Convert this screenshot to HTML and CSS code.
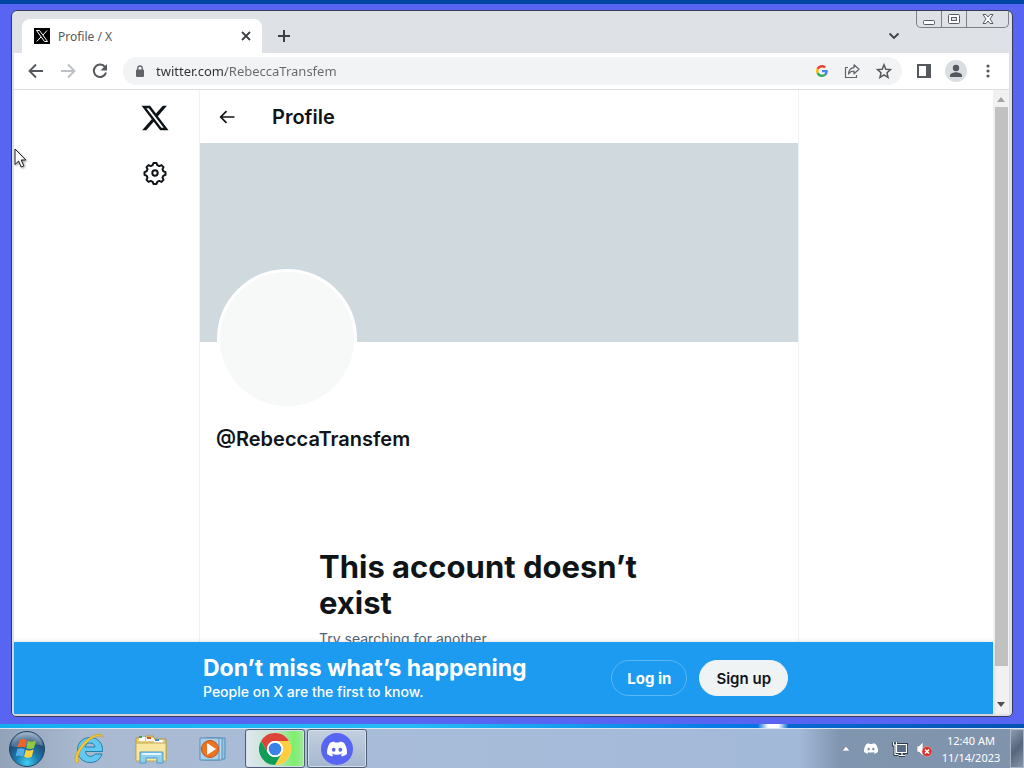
FILE: index.html
```html
<!DOCTYPE html>
<html lang="en">

<head>
    <meta charset="utf-8">
    <meta name="viewport" content="width=device-width, initial-scale=1.0">
    <title>Profile / X</title>
    <link rel="stylesheet" href="styles.css">
</head>

<body>
    <div class="desktop">
        <div class="window">
            <div class="tabstrip">
                <div class="tab">
                    <svg class="favicon" width="16" height="16" viewBox="0 0 16 16">
                        <rect width="16" height="16" fill="#000"/>
                        <path d="M2.5 2.5h3l8 11h-3zM13 2.5 9 7M7 9l-4.300 4.500" fill="none" stroke="#fff" stroke-width="1"/>
                    </svg>
                    <span class="tab-title">Profile / X</span>
                    <button class="icon-btn tab-close" aria-label="Close tab">
                        <svg width="10" height="10" viewBox="0 0 10 10"><path d="M1 1l8 8M9 1 1 9" stroke="#3c4043" stroke-width="1.800"/></svg>
                    </button>
                </div>
                <button class="icon-btn new-tab" aria-label="New tab">
                    <svg width="14" height="14" viewBox="0 0 14 14"><path d="M7 1v12M1 7h12" stroke="#3c4043" stroke-width="2"/></svg>
                </button>
                <button class="icon-btn tab-search" aria-label="Search tabs">
                    <svg width="12" height="8" viewBox="0 0 12 8"><path d="M1.500 1.500 6 6l4.500-4.500" fill="none" stroke="#3c4043" stroke-width="1.800"/></svg>
                </button>
                <div class="caption">
                    <button class="caption-btn" aria-label="Minimize">
                        <svg width="14" height="14" viewBox="0 0 14 14"><rect x="1.500" y="8.500" width="11" height="4" rx="1" fill="#fff" stroke="#5b5d66"/></svg>
                    </button>
                    <button class="caption-btn" aria-label="Maximize">
                        <svg width="14" height="14" viewBox="0 0 14 14"><rect x="1.500" y="2.500" width="11" height="9" rx="1" fill="#fff" stroke="#5b5d66"/><rect x="4.500" y="5.500" width="5" height="3" fill="#dee1e6" stroke="#5b5d66"/></svg>
                    </button>
                    <button class="caption-btn caption-close" aria-label="Close">
                        <svg width="14" height="14" viewBox="0 0 14 14"><path d="M2 2.500h3l2 2.500 2-2.500h3L9 7l3 4.500H9L7 9l-2 2.500H2L5 7z" fill="#fff" stroke="#5b5d66"/></svg>
                    </button>
                </div>
            </div>

            <div class="toolbar">
                <button class="icon-btn nav-btn" aria-label="Back">
                    <svg width="16" height="16" viewBox="0 0 16 16"><path d="M15 8H2M8 1.500 1.500 8 8 14.500" fill="none" stroke="#55585c" stroke-width="1.900"/></svg>
                </button>
                <button class="icon-btn nav-btn" aria-label="Forward">
                    <svg width="16" height="16" viewBox="0 0 16 16"><path d="M1 8h13M8 1.500 14.500 8 8 14.500" fill="none" stroke="#bdc0c4" stroke-width="1.900"/></svg>
                </button>
                <button class="icon-btn nav-btn" aria-label="Reload">
                    <svg width="16" height="16" viewBox="0 0 16 16"><path d="M13.300 4.500A6.200 6.200 0 1 0 14 9.500" fill="none" stroke="#55585c" stroke-width="2"/><path d="M15 1v6.500H8.500z" fill="#55585c"/></svg>
                </button>
                <div class="omnibox">
                    <svg class="lock" width="10" height="13" viewBox="0 0 10 13"><rect x="1" y="4.500" width="8" height="7.500" rx="1" fill="#5f6368"/><path d="M2.800 5V3a2.200 2 0 0 1 4.400 0v2" fill="none" stroke="#5f6368" stroke-width="1.300"/></svg>
                    <input class="url" type="text" aria-label="Address and search bar" value="twitter.com/RebeccaTransfem">
                    <svg width="12" height="12" viewBox="0 0 48 48">
                        <path fill="#ea4335" d="M24 9.500c3.540 0 6.710 1.220 9.210 3.600l6.850-6.850C35.900 2.380 30.470 0 24 0 14.620 0 6.510 5.380 2.560 13.220l7.980 6.190C12.430 13.720 17.740 9.500 24 9.500z"/>
                        <path fill="#4285f4" d="M46.980 24.550c0-1.570-.15-3.090-.38-4.550H24v9.020h12.940c-.58 2.960-2.260 5.480-4.780 7.180l7.730 6c4.510-4.180 7.090-10.360 7.090-17.650z"/>
                        <path fill="#fbbc05" d="M10.530 28.590A14.500 14.500 0 0 1 9.770 24c0-1.600.27-3.140.76-4.590l-7.980-6.190A23.900 23.900 0 0 0 0 24c0 3.880.92 7.540 2.560 10.780z"/>
                        <path fill="#34a853" d="M24 48c6.480 0 11.930-2.130 15.890-5.810l-7.730-6c-2.150 1.450-4.920 2.300-8.160 2.300-6.260 0-11.570-4.220-13.470-9.910l-7.980 6.190C6.510 42.620 14.620 48 24 48z"/>
                    </svg>
                    <svg width="16" height="16" viewBox="0 0 16 16"><path d="M4 4.500H1.500v10h11V12M4.500 11c.3-4 2-6 5.500-6.300V1.800L15 6.300l-5 4.500V8c-2.500 0-4 .8-5.500 3z" fill="none" stroke="#5f6368" stroke-width="1.200" stroke-linejoin="round"/></svg>
                    <svg width="16" height="16" viewBox="0 0 16 16"><path d="m8 1.800 1.800 4.400 4.700.4L11 9.700l1 4.600-4-2.500-4 2.500 1-4.600-3.500-3.100 4.700-.4z" fill="none" stroke="#55585c" stroke-width="1.500"/></svg>
                </div>
                <button class="icon-btn tool-btn" aria-label="Side panel">
                    <svg width="14" height="14" viewBox="0 0 14 14"><rect x="1" y="1" width="12" height="12" fill="#fff" stroke="#55585c" stroke-width="2"/><path d="M9 0h5v14H9z" fill="#55585c"/></svg>
                </button>
                <button class="icon-btn tool-btn account" aria-label="You">
                    <svg width="14" height="14" viewBox="0 0 14 14"><circle cx="7" cy="4" r="3.200" fill="#55585c"/><path d="M1 13v-1.500c0-2 4-3.200 6-3.200s6 1.200 6 3.200V13z" fill="#55585c"/></svg>
                </button>
                <button class="icon-btn tool-btn" aria-label="Menu">
                    <svg width="4" height="14" viewBox="0 0 4 14" fill="#55585c"><circle cx="2" cy="2" r="1.600"/><circle cx="2" cy="7" r="1.600"/><circle cx="2" cy="12" r="1.600"/></svg>
                </button>
            </div>

            <div class="viewport">
                <div class="site">
                    <div class="page">
                        <nav class="sidebar">
                            <a href="#" aria-label="X">
                                <svg width="30" height="30" viewBox="0 0 24 24" fill="#0f1419"><path d="M18.244 2.250h3.308l-7.227 8.260 8.502 11.240H16.170l-5.214-6.817L4.990 21.750H1.680l7.730-8.835L1.254 2.250H8.080l4.713 6.231zm-1.161 17.520h1.833L7.084 4.126H5.117z"/></svg>
                            </a>
                            <a href="#" aria-label="Settings">
                                <svg width="26" height="26" viewBox="0 0 26 26" fill="none" stroke="#0f1419" stroke-width="2" stroke-linejoin="round"><path d="M11.500 3h3l.8 2.200 2 .9 2.200-1 2 2-1 2.200.9 2 2.100.8v2.800l-2.100.8-.9 2 1 2.200-2 2-2.200-1-2 .9-.8 2.200h-3l-.8-2.200-2-.9-2.200 1-2-2 1-2.200-.9-2-2.100-.8v-2.800l2.100-.8.9-2-1-2.200 2-2 2.200 1 2-.9z"/><circle cx="13" cy="13" r="2.700"/></svg>
                            </a>
                        </nav>
                        <main class="column">
                            <header class="column-header">
                                <button class="icon-btn back" aria-label="Back">
                                    <svg width="16" height="14" viewBox="0 0 16 14"><path d="M15.500 7H2M7.500 1.200 1.700 7l5.800 5.800" fill="none" stroke="#0f1419" stroke-width="1.700"/></svg>
                                </button>
                                <h2>Profile</h2>
                            </header>
                            <div class="banner"></div>
                            <div class="avatar"></div>
                            <div class="handle">@RebeccaTransfem</div>
                            <section class="empty">
                                <h1>This account doesn’t exist</h1>
                                <p>Try searching for another.</p>
                            </section>
                        </main>
                    </div>
                    <div class="signup-bar">
                        <div class="signup-inner">
                            <div class="signup-text">
                                <strong>Don’t miss what’s happening</strong>
                                <span>People on X are the first to know.</span>
                            </div>
                            <button class="pill login">Log in</button>
                            <button class="pill signup">Sign up</button>
                        </div>
                    </div>
                </div>
                <div class="scrollbar">
                    <svg width="8" height="5" viewBox="0 0 8 5"><path d="M0 5l4-5 4 5z" fill="#a3a3a3"/></svg>
                    <div class="thumb"></div>
                    <svg width="8" height="5" viewBox="0 0 8 5"><path d="M0 0l4 5 4-5z" fill="#505050"/></svg>
                </div>
            </div>
        </div>
    </div>

    <div class="wallpaper"></div>

    <footer class="taskbar">
        <button class="start" aria-label="Start">
            <svg width="38" height="38" viewBox="0 0 38 38">
                <defs>
                    <radialGradient id="orb" cx="50%" cy="90%" r="85%">
                        <stop offset="0" stop-color="#3fd0f2"/><stop offset=".4" stop-color="#1a78ad"/><stop offset=".75" stop-color="#214d78"/><stop offset="1" stop-color="#7d9bb8"/>
                    </radialGradient>
                </defs>
                <circle cx="19" cy="19" r="17.500" fill="url(#orb)" stroke="#26435f"/>
                <path d="M3.500 16a15.600 15.600 0 0 1 31 0c-9-5-20 4-31 0z" fill="#fff" opacity=".22"/>
                <path d="M11.500 10c3-1.500 5-1 7.300.3l-1.800 7.500c-2.500-1.300-4.500-1.500-7.300-.2z" fill="#f0642c"/>
                <path d="M20 10.800c2.500 1.300 5 1.200 8-.2L26 18c-2.800 1.300-5.200 1.300-7.800 0z" fill="#8fc843"/>
                <path d="M9.400 19c2.700-1.200 4.800-1 7.300.3L15 26.500c-2.400-1.300-4.600-1.300-7.300-.2z" fill="#52aee8"/>
                <path d="M17.900 19.700c2.500 1.200 5 1.100 7.800-.2l-2 7.300c-2.600 1.300-5 1.200-7.600 0z" fill="#fdd13b"/>
            </svg>
        </button>
        <button class="task" aria-label="Internet Explorer">
            <svg width="32" height="32" viewBox="0 0 32 32">
                <path d="M29.500 18.500H12.500c.3 3 2 4.800 5 4.800 2.200 0 3.600-.9 4.500-2.300h7c-1.700 5.500-6 8.500-11.500 8.500C10 29.500 4.500 24.500 4.500 17S10 4.500 17 4.500c7.800 0 13 5.500 12.500 14zm-7.500-4.500c-.4-2.500-2-4-5-4-2.700 0-4.300 1.500-5 4z" fill="#62c8f0" stroke="#237fae"/>
                <path d="M3 29.500C-1 25 7 11 16 5c7-4.500 13-5 14-1-3-2-6-.8-10 1C11 10 3 22 5.500 28c-.5 2-1.500 2.500-2.500 1.500z" fill="#f4ca35" stroke="#c99719" stroke-width=".6"/>
            </svg>
        </button>
        <button class="task" aria-label="Windows Explorer">
            <svg width="34" height="32" viewBox="0 0 34 32">
                <path d="M2 5h8l2-2h7l2 3h11v20H2z" fill="#e9cf78" stroke="#b59a48"/>
                <path d="M5 4h6v4H5zM12 5h8v3h-8zM20 7h9v3h-9z" fill="#fff"/>
                <path d="M5 3h3v2H5z" fill="#3fa33f"/><path d="M13 4h4v2h-4z" fill="#d4502f"/><path d="M21 6h4v2h-4z" fill="#418fd6"/>
                <path d="M2 10h30v18H2z" fill="#f8e7a1" stroke="#c2a752"/>
                <path d="M6 19h23v11h-6v-5H12v5H6z" fill="#8fd0ee" stroke="#4a9bc7"/><path d="M8 20h19v2H8z" fill="#e2f7ff"/>
            </svg>
        </button>
        <button class="task" aria-label="Windows Media Player">
            <svg width="30" height="30" viewBox="0 0 30 30">
                <path d="M9 4h18v21H9z" fill="#8ec4e6" stroke="#5a8fb8"/><path d="M6 4h18v22H6z" fill="#b5daef" stroke="#5a8fb8"/><path d="M2 4h19v22H2z" fill="#a9d1ea" stroke="#5a8fb8"/>
                <circle cx="12" cy="15" r="8.500" fill="#ee7322" stroke="#c9530f"/><path d="M9 9v12l9-6z" fill="#fff"/>
            </svg>
        </button>
        <button class="task open active" aria-label="Google Chrome">
            <svg width="32" height="32" viewBox="0 0 32 32">
                <circle cx="16" cy="16" r="16" fill="#fff"/>
                <path d="M2.140 8A16 16 0 0 1 29.860 8H16a8 8 0 0 0-6.930 12z" fill="#db4437"/>
                <path d="M29.860 8A16 16 0 0 1 16 32l6.930-12A8 8 0 0 0 16 8z" fill="#ffcd40"/>
                <path d="M16 32A16 16 0 0 1 2.140 8l6.930 12A8 8 0 0 0 22.930 20z" fill="#0f9d58"/>
                <circle cx="16" cy="16" r="8" fill="#fff"/><circle cx="16" cy="16" r="6.300" fill="#3b82e6"/>
            </svg>
        </button>
        <button class="task open" aria-label="Discord">
            <svg width="32" height="32" viewBox="0 0 32 32">
                <circle cx="16" cy="16" r="16" fill="#5865f2"/>
                <path transform="translate(6 8.500) scale(.835)" fill="#fff" fill-rule="evenodd" d="M20.300 1.500A20 20 0 0 0 15.400 0l-.7 1.300a18 18 0 0 0-5.400 0L8.600 0a20 20 0 0 0-4.900 1.500C.6 6.100-.3 10.600.1 15a20 20 0 0 0 6 3l1.300-2.100-2-1 .5-.4a14 14 0 0 0 12.200 0l.5.4-2 1 1.300 2.100a20 20 0 0 0 6-3c.5-5.100-.9-9.600-3.600-13.500zM8 12.300c-1.200 0-2.200-1.100-2.200-2.400S6.800 7.500 8 7.500s2.200 1.100 2.200 2.400S9.200 12.300 8 12.300zm8 0c-1.200 0-2.200-1.100-2.200-2.400s1-2.400 2.200-2.400 2.200 1.100 2.200 2.400-1 2.400-2.200 2.400z"/>
            </svg>
        </button>
        <div class="tray">
            <svg width="8" height="5" viewBox="0 0 8 5"><path d="M0 5l4-5 4 5z" fill="#fff" stroke="#4c5b70" stroke-width=".5"/></svg>
            <svg width="14" height="11" viewBox="0 0 24 18"><path fill="#fff" fill-rule="evenodd" d="M20.300 1.500A20 20 0 0 0 15.400 0l-.7 1.300a18 18 0 0 0-5.400 0L8.600 0a20 20 0 0 0-4.900 1.500C.6 6.100-.3 10.600.1 15a20 20 0 0 0 6 3l1.300-2.100-2-1 .5-.4a14 14 0 0 0 12.200 0l.5.4-2 1 1.300 2.100a20 20 0 0 0 6-3c.5-5.100-.9-9.600-3.600-13.500zM8 12.300c-1.200 0-2.200-1.100-2.200-2.400S6.800 7.500 8 7.500s2.200 1.100 2.200 2.400S9.200 12.300 8 12.300zm8 0c-1.200 0-2.200-1.100-2.200-2.400s1-2.400 2.200-2.400 2.200 1.100 2.200 2.400-1 2.400-2.200 2.400z"/></svg>
            <svg width="16" height="16" viewBox="0 0 16 16"><path d="M4.500 3.500h10v8h-10zM7 14.500h6M10 12v2M1.500 1v3h3V1M3 4v9.500h3" fill="none" stroke="#2f3b4a" stroke-width="3"/><path d="M4.500 3.500h10v8h-10z" fill="#596b82"/><path d="M4.500 3.500h10v8h-10zM7 14.500h6M10 12v2M1.500 1v3h3V1M3 4v9.500h3" fill="none" stroke="#fff" stroke-width="1.200"/></svg>
            <svg width="16" height="16" viewBox="0 0 16 16"><path d="M1 5h2l4-4v14l-4-4H1z" fill="#fff" stroke="#7a8798" stroke-width=".6"/><circle cx="11" cy="10.500" r="5" fill="#d9322b" stroke="#f3b4b0" stroke-width=".5"/><path d="m9 8.500 4 4m0-4-4 4" stroke="#fff" stroke-width="1.600"/></svg>
        </div>
        <div class="clock">12:40 AM<br>11/14/2023</div>
        <button class="show-desktop" aria-label="Show desktop"></button>
    </footer>

    <svg class="cursor" width="14" height="21" viewBox="0 0 14 21"><path d="M1 1v15.500l3.600-3.500 2.600 6 2.600-1.200-2.600-5.800h4.600z" fill="#fff" stroke="#1b1b1b"/></svg>
</body>

</html>
```
FILE: styles.css
```css
* {
    box-sizing: border-box;
}

body {
    margin: 0;
    height: 100vh;
    display: flex;
    flex-direction: column;
    overflow: hidden;
    font-family: "Noto Sans", sans-serif;
    background: #5865f2;
}

button {
    font-family: inherit;
    margin: 0;
    padding: 0;
    border: 0;
    background: none;
}

svg {
    display: block;
    flex-shrink: 0;
}

h1,
h2,
p {
    margin: 0;
}

.icon-btn {
    display: flex;
    align-items: center;
    justify-content: center;
}

.desktop {
    flex: 1;
    min-height: 0;
    display: flex;
    border-top: 4px solid #0046a3;
    padding: 6px 11px 7px;
}

.wallpaper {
    height: 4px;
    background: linear-gradient(to right, #13aef0, #25bdf5 40%, #087be6 70%, #0875e0 74%, #fff 75%, #fff 76%, #0869d2 77%, #0452b0);
}

/* browser window */
.window {
    flex: 1;
    min-width: 0;
    display: flex;
    flex-direction: column;
    border: 1px solid #37395c;
    border-radius: 6px 6px 5px 5px;
    padding: 0 3px 2px 2px;
    background: #dee1e6;
    overflow: hidden;
}

.tabstrip {
    height: 42px;
    display: flex;
    align-items: flex-end;
    padding-left: 8px;
}

.tab {
    width: 240px;
    height: 34px;
    display: flex;
    align-items: center;
    gap: 8px;
    padding: 0 10px 0 12px;
    border-radius: 8px 8px 0 0;
    background: #fff;
}

.tab-title {
    flex: 1;
    font-size: 12px;
    color: #55595d;
}

.tab-close {
    width: 12px;
    height: 16px;
}

.new-tab {
    width: 28px;
    height: 34px;
    margin-left: 8px;
}

.tab-search {
    width: 28px;
    height: 34px;
    margin-left: auto;
}

.caption {
    align-self: flex-start;
    display: flex;
    margin-left: 8px;
    border: 1px solid #7d8088;
    border-top: 0;
    border-radius: 0 0 5px 5px;
}

.caption-btn {
    width: 25px;
    height: 16px;
    display: flex;
    align-items: center;
    justify-content: center;
    border-right: 1px solid #7d8088;
}

.caption-close {
    width: 41px;
    border-right: 0;
}

.toolbar {
    height: 37px;
    display: flex;
    align-items: center;
    padding: 0 5px 0 6px;
    background: #fff;
    border-bottom: 1px solid #dcdee0;
}

.nav-btn,
.tool-btn {
    width: 32px;
    height: 32px;
}

.account {
    width: 22px;
    height: 22px;
    margin: 0 5px;
    border-radius: 50%;
    background: #dadde2;
}

.omnibox {
    flex: 1;
    min-width: 0;
    height: 28px;
    display: flex;
    align-items: center;
    gap: 16px;
    margin: 0 6px 0 7px;
    padding: 0 10px 0 12px;
    border-radius: 14px;
    background: #f1f3f4;
}

.lock {
    margin-right: -5px;
}

.url {
    flex: 1;
    min-width: 0;
    padding: 0;
    border: 0;
    outline: 0;
    font: 13px "Noto Sans", sans-serif;
    color: transparent;
    background: linear-gradient(to right, #303236 70px, #65696e 70px);
    -webkit-background-clip: text;
    background-clip: text;
}

.viewport {
    flex: 1;
    min-height: 0;
    display: flex;
    background: #fff;
}

/* profile page */
.site {
    flex: 1;
    min-width: 0;
    display: flex;
    flex-direction: column;
    font-family: Inter, sans-serif;
    color: #0f1419;
}

.page {
    flex: 1;
    min-height: 0;
    display: grid;
    grid-template-columns: 185px minmax(0, 600px) 1fr;
    overflow: hidden;
}

.sidebar {
    display: flex;
    flex-direction: column;
    align-items: center;
    gap: 27px;
    padding: 13px 0 0 97px;
}

.column {
    border: solid #eff3f4;
    border-width: 0 1px;
}

.column-header {
    height: 53px;
    display: flex;
    align-items: center;
    gap: 36px;
    padding-left: 18px;
}

.back {
    width: 18px;
    height: 32px;
}

.column-header h2 {
    font-size: 20px;
    line-height: 24px;
    font-weight: 600;
}

.banner {
    height: 199px;
    background: #cfd9de;
}

.avatar {
    width: 140px;
    height: 140px;
    margin: -73px 0 0 17px;
    border: 3px solid #fff;
    border-radius: 50%;
    background: #f7f9f9;
    position: relative;
}

.handle {
    margin: 18px 16px 0;
    font-size: 20px;
    line-height: 24px;
    font-weight: 600;
}

.empty {
    width: 360px;
    margin: 98px auto 0;
}

.empty h1 {
    font-size: 31px;
    line-height: 36px;
    font-weight: 700;
}

.empty p {
    margin-top: 8px;
    font-size: 14px;
    line-height: 20px;
    color: #536471;
}

.signup-bar {
    height: 72px;
    display: flex;
    align-items: center;
    padding-left: 189px;
    background: #1d9bf0;
    box-shadow: 0 0 5px rgba(0, 0, 0, .15);
    z-index: 1;
}

.signup-inner {
    flex: 0 1 585px;
    display: flex;
    align-items: center;
    gap: 12px;
}

.signup-text {
    flex: 1;
    display: flex;
    flex-direction: column;
    color: #fff;
}

.signup-text strong {
    font-size: 23px;
    line-height: 28px;
    font-weight: 700;
}

.signup-text span {
    font-size: 14px;
    line-height: 20px;
    font-weight: 500;
}

.pill {
    height: 36px;
    padding: 0 15px;
    border: 1px solid #5cb8f5;
    border-radius: 18px;
    font-size: 15px;
    font-weight: 700;
    color: #fff;
    white-space: nowrap;
}

.signup {
    padding: 0 16px;
    border-color: #eff3f4;
    background: #eff3f4;
    font-weight: 600;
    color: #0f1419;
}

.scrollbar {
    width: 16px;
    display: flex;
    flex-direction: column;
    align-items: center;
    padding: 7px 0;
    background: #f1f1f1;
}

.thumb {
    width: 13px;
    flex: 1;
    margin: 5px 0 36px;
    background: #c1c1c1;
}

/* taskbar */
.taskbar {
    height: 40px;
    display: flex;
    align-items: center;
    border-top: 1px solid #dbe6f0;
    background: linear-gradient(to right, #92a2b8, #a9b9d0 8%, #a9bdd9 30%, #a3b9d8 78%, #8095af 82%, #8093ac);
}

.start {
    margin: 0 12px 0 8px;
}

.task {
    width: 62px;
    height: 39px;
    display: flex;
    align-items: center;
    justify-content: center;
}

.open {
    width: 60px;
    margin-left: 2px;
    border: 1px solid #4e5f75;
    border-radius: 3px;
    background: linear-gradient(to bottom, #c3d0e0, #a5b7cf);
    box-shadow: inset 0 0 0 1px #d5deea;
}

.active {
    margin-left: 1px;
    background: linear-gradient(to right, #dfe8ef, #c5e0cf 50%, #7cf06c 82%, #a5e79d);
}

.tray {
    display: flex;
    align-items: center;
    gap: 14px;
    margin-left: auto;
}

.tray svg:last-child {
    margin-left: -6px;
}

.clock {
    width: 78px;
    font-size: 11px;
    line-height: 17px;
    text-align: center;
    color: #fff;
}

.show-desktop {
    width: 14px;
    height: 39px;
    border: 1px solid #a9b6c6;
    background: linear-gradient(135deg, #8c9bb0, #56657b 50%, #8594a8);
}

/* mouse pointer floats over the desktop */
.cursor {
    position: absolute;
    left: 14px;
    top: 148px;
    filter: drop-shadow(1px 1px 1px rgba(0, 0, 0, .4));
}
```
